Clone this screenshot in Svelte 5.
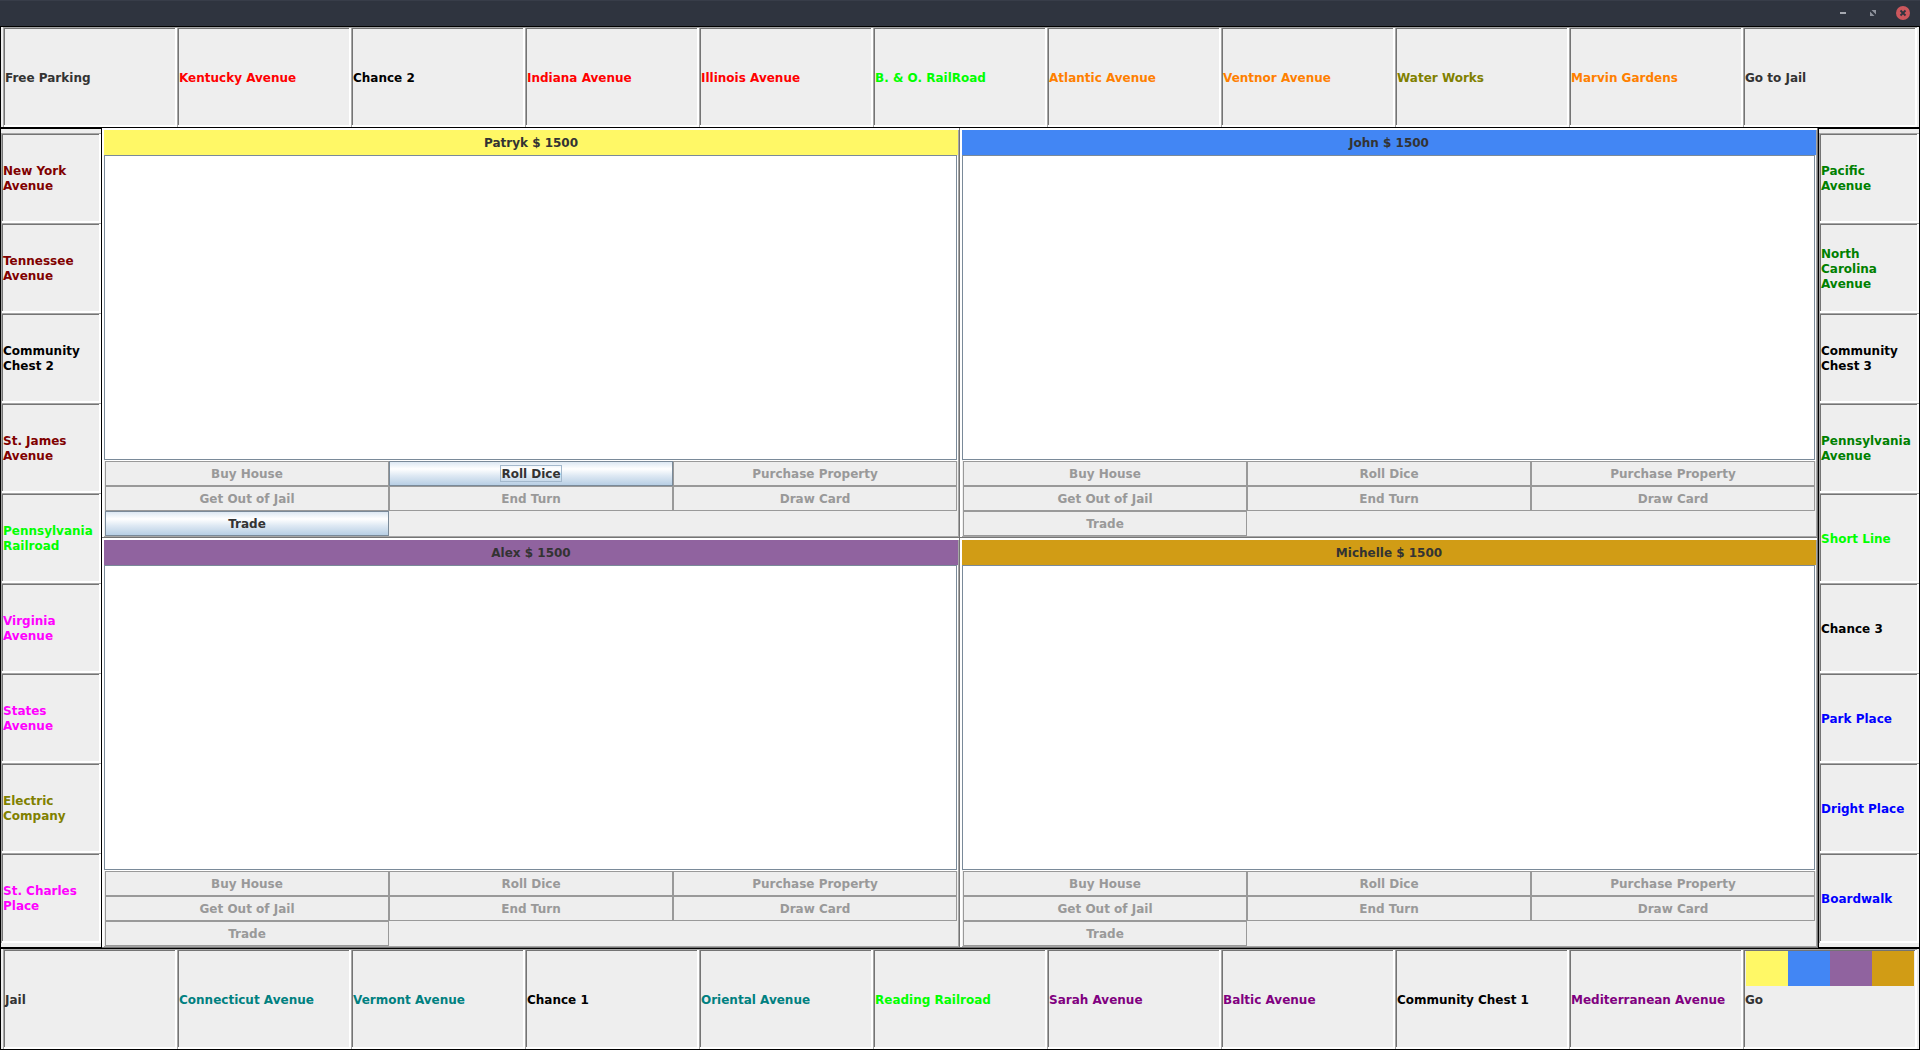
<script>
  const top = [
    ['Free Parking', 'plain'],
    ['Kentucky Avenue', 'red'],
    ['Chance 2', 'black'],
    ['Indiana Avenue', 'red'],
    ['Illinois Avenue', 'red'],
    ['B. & O. RailRoad', 'lime'],
    ['Atlantic Avenue', 'orange'],
    ['Ventnor Avenue', 'orange'],
    ['Water Works', 'olive'],
    ['Marvin Gardens', 'orange'],
    ['Go to Jail', 'plain']
  ];
  const left = [
    ['New York Avenue', 'maroon'],
    ['Tennessee Avenue', 'maroon'],
    ['Community Chest 2', 'black'],
    ['St. James Avenue', 'maroon'],
    ['Pennsylvania Railroad', 'lime'],
    ['Virginia Avenue', 'magenta'],
    ['States Avenue', 'magenta'],
    ['Electric Company', 'olive'],
    ['St. Charles Place', 'magenta']
  ];
  const right = [
    ['Pacific Avenue', 'green'],
    ['North Carolina Avenue', 'green'],
    ['Community Chest 3', 'black'],
    ['Pennsylvania Avenue', 'green'],
    ['Short Line', 'lime'],
    ['Chance 3', 'black'],
    ['Park Place', 'blue'],
    ['Dright Place', 'blue'],
    ['Boardwalk', 'blue']
  ];
  const bottom = [
    ['Jail', 'plain'],
    ['Connecticut Avenue', 'teal'],
    ['Vermont Avenue', 'teal'],
    ['Chance 1', 'black'],
    ['Oriental Avenue', 'teal'],
    ['Reading Railroad', 'lime'],
    ['Sarah Avenue', 'purple'],
    ['Baltic Avenue', 'purple'],
    ['Community Chest 1', 'black'],
    ['Mediterranean Avenue', 'purple'],
    ['Go', 'plain']
  ];
  const actions = ['Buy House', 'Roll Dice', 'Purchase Property', 'Get Out of Jail', 'End Turn', 'Draw Card', 'Trade'];

  let players = $state([
    { name: 'Patryk', money: 1500, token: 'yellow', enabled: ['Roll Dice', 'Trade'], log: '' },
    { name: 'John', money: 1500, token: 'azure', enabled: [], log: '' },
    { name: 'Alex', money: 1500, token: 'violet', enabled: [], log: '' },
    { name: 'Michelle', money: 1500, token: 'gold', enabled: [], log: '' }
  ]);
</script>

{#snippet square(name, color)}
  <div class="square {color}">
    {#if name === 'Go'}
      <div class="tokens">
        {#each players as p}<span class="token {p.token}"></span>{/each}
      </div>
    {/if}
    <span>{name}</span>
  </div>
{/snippet}

<div class="window">
  <header class="titlebar">
    <button class="control" aria-label="Minimize">
      <svg width="14" height="14" viewBox="0 0 14 14"><path d="M4 6h6v2H4z" fill="#a5a8b0" /></svg>
    </button>
    <button class="control" aria-label="Restore">
      <svg width="14" height="14" viewBox="0 0 14 14"><path d="M5.500 4H10v4.500zM4 5.500v4.500h4.500z" fill="#8f939d" /></svg>
    </button>
    <button class="control" aria-label="Close">
      <svg width="14" height="14" viewBox="0 0 14 14">
        <circle cx="7" cy="7" r="7" fill="#cc575d" />
        <path d="M4.500 4.500l5 5M9.500 4.500l-5 5" stroke="#2f343f" stroke-width="1.800" />
      </svg>
    </button>
  </header>

  <main class="board">
    <div class="row">{#each top as [name, color]}{@render square(name, color)}{/each}</div>
    <div class="middle">
      <div class="side west">{#each left as [name, color]}{@render square(name, color)}{/each}</div>
      <div class="players">
        {#each players as p}
          <section class="player">
            <h2 class={p.token}>{p.name} $ {p.money}</h2>
            <textarea aria-label="{p.name} log" bind:value={p.log}></textarea>
            <div class="actions">
              {#each actions as action}
                <button class="action" disabled={!p.enabled.includes(action)}>
                  <span class:focused={action === 'Roll Dice' && p.enabled.includes(action)}>{action}</span>
                </button>
              {/each}
            </div>
          </section>
        {/each}
      </div>
      <div class="side east">{#each right as [name, color]}{@render square(name, color)}{/each}</div>
    </div>
    <div class="row">{#each bottom as [name, color]}{@render square(name, color)}{/each}</div>
  </main>
</div>

<style>
  :global(body) {
    margin: 0;
  }

  .window,
  .window * {
    box-sizing: border-box;
  }

  .window {
    display: flex;
    flex-direction: column;
    min-height: 100vh;
    background: #000;
    color: #333;
    font: bold 12px/15px 'DejaVu Sans', sans-serif;
  }

  .titlebar {
    display: flex;
    align-items: flex-start;
    justify-content: flex-end;
    gap: 16px;
    height: 26px;
    padding: 5px 10px 0 0;
    background: #2f343f;
    border-top: 1px solid #383d49;
  }

  .control {
    display: flex;
    padding: 0;
    border: 0;
    background: none;
  }

  .board {
    flex: 1;
    display: flex;
    flex-direction: column;
    gap: 1px;
    border: 1px solid #000;
  }

  .row {
    display: grid;
    grid-template-columns: repeat(11, minmax(0, 1fr));
    height: 100px;
    padding: 0 2px;
    background: #eee;
  }

  .square {
    position: relative;
    display: flex;
    align-items: center;
    min-width: 0;
    padding: 4px 2px 2px;
    background: #eee;
    box-shadow:
      inset 1px 1px #a6a6a6,
      inset -2px -2px #fff,
      inset 2px 2px #747474;
  }

  .tokens {
    position: absolute;
    inset: 2px 2px auto;
    display: grid;
    grid-template-columns: repeat(4, 1fr);
    padding: 0 1px;
  }

  .token {
    height: 35px;
  }

  .middle {
    flex: 1;
    display: flex;
  }

  .side {
    display: flex;
    flex-direction: column;
    flex: 0 0 101px;
    padding: 4px 0;
    background: #eee;
    border: 0 solid #000;
    border-width: 1px 0;
  }

  .side .square {
    flex: 1;
  }

  .west {
    border-right-width: 1px;
  }

  .east {
    border-left-width: 1px;
  }

  .players {
    flex: 1;
    display: grid;
    grid-template-columns: repeat(2, minmax(0, 1fr));
    grid-auto-rows: 1fr;
  }

  .player {
    display: flex;
    flex-direction: column;
    padding: 2px;
    background: #eee;
    box-shadow:
      inset -1px -1px #747474,
      inset 2px 2px #fff,
      inset -2px -2px #a6a6a6;
  }

  h2 {
    margin: 0;
    padding: 6px 0 4px;
    font: inherit;
    text-align: center;
  }

  textarea {
    flex: 1;
    display: block;
    width: calc(100% - 1px);
    margin-bottom: 1px;
    padding: 2px;
    border: 1px solid #7a8a99;
    border-radius: 0;
    outline: 0;
    background: #fff;
    box-shadow: 1px 1px #fff;
    color: #333;
    font: inherit;
    resize: none;
  }

  .actions {
    display: grid;
    grid-template-columns: repeat(3, 1fr);
    padding: 0 1px;
  }

  .action {
    display: flex;
    align-items: center;
    justify-content: center;
    height: 25px;
    padding: 0;
    border: 1px solid #7a8a99;
    border-radius: 0;
    background: linear-gradient(#dde8f3, #fff 30%, #dde8f3 60%, #b8cfe5);
    color: #333;
    font: inherit;
  }

  .action:disabled {
    border-color: #999;
    background: #eee;
    color: #999;
  }

  .action span {
    height: 15px;
    line-height: 17px;
  }

  .focused {
    outline: 1px solid #a3b8cc;
  }

  .yellow { background: #fff866; }
  .azure { background: #4286f4; }
  .violet { background: #90639f; }
  .gold { background: #d19c15; }

  .black { color: #000; }
  .red { color: #f00; }
  .lime { color: #0f0; }
  .orange { color: #ff8000; }
  .olive { color: #808000; }
  .maroon { color: #800000; }
  .magenta { color: #f0f; }
  .green { color: #008000; }
  .blue { color: #00f; }
  .teal { color: #008080; }
  .purple { color: #800080; }
</style>
